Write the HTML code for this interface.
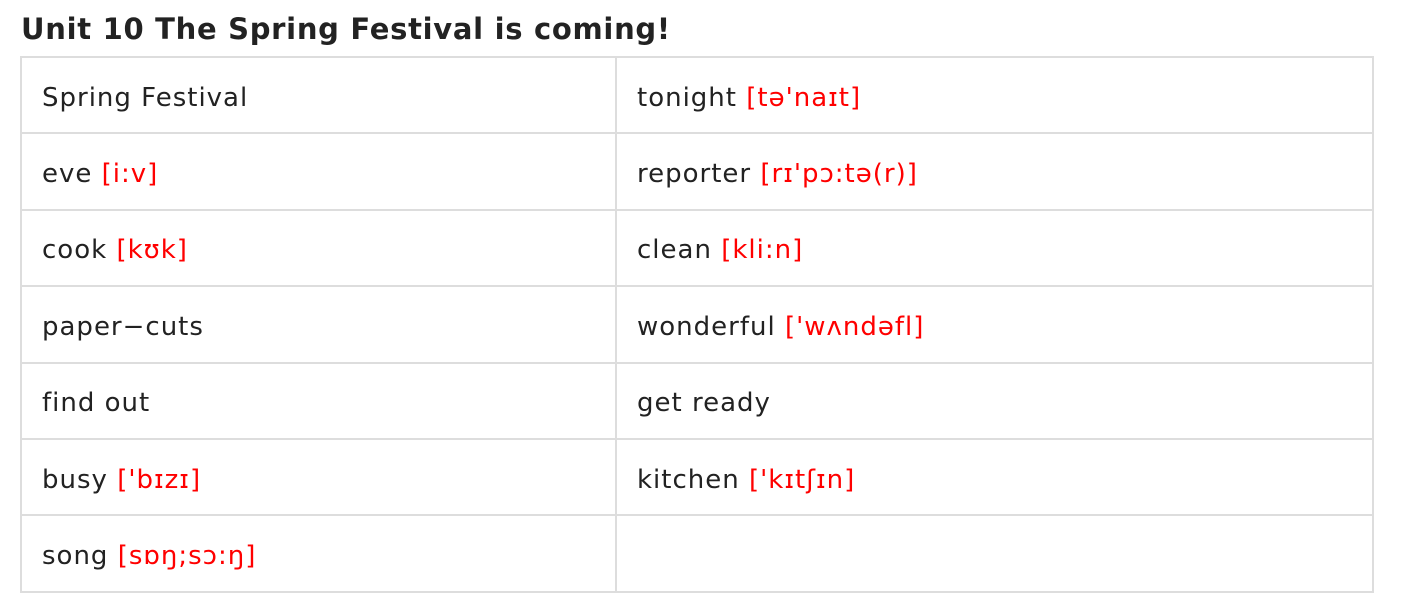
<!DOCTYPE html>
<html><head><meta charset="utf-8"><style>
body{margin:0;background:#fff;width:1404px;height:612px;overflow:hidden;font-family:"DejaVu Sans",sans-serif;color:#222}
h1{position:absolute;left:21px;top:9px;margin:0;font-size:29px;font-weight:bold;color:#222;line-height:40px;letter-spacing:0.7px}
table{position:absolute;left:20px;top:56px;border-collapse:collapse;width:1354px}
tr{height:76.4px}
td{border:2px solid #ddd;height:76.4px;padding:5px 0 0 20px;box-sizing:border-box;font-size:26px;vertical-align:middle;line-height:30px;letter-spacing:1px}
td:first-child{width:595px}
.r{color:#f00}
</style></head><body>
<h1>Unit 10 The Spring Festival is coming!</h1>
<table>
<tr><td>Spring Festival</td><td>tonight <span class="r">[tə'naɪt]</span></td></tr>
<tr><td>eve <span class="r">[i:v]</span></td><td>reporter <span class="r">[rɪ'pɔ:tə(r)]</span></td></tr>
<tr><td>cook <span class="r">[kʊk]</span></td><td>clean <span class="r">[kli:n]</span></td></tr>
<tr><td>paper−cuts</td><td>wonderful <span class="r">['wʌndəfl]</span></td></tr>
<tr><td>find out</td><td>get ready</td></tr>
<tr><td>busy <span class="r">['bɪzɪ]</span></td><td>kitchen <span class="r">['kɪtʃɪn]</span></td></tr>
<tr><td>song <span class="r">[sɒŋ;sɔ:ŋ]</span></td><td></td></tr>
</table>
</body></html>
